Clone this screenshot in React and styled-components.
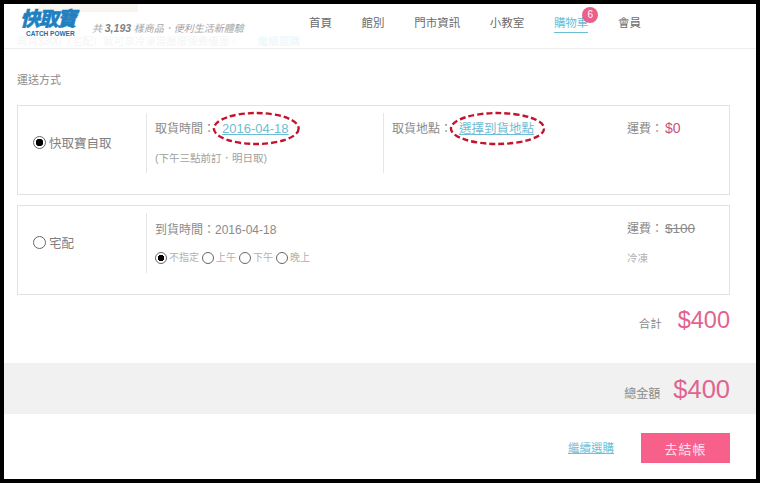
import React from 'react'
import styled, { createGlobalStyle } from 'styled-components'

const FONT = `"Liberation Sans", "Noto Sans CJK TC", sans-serif`

const GlobalStyle = createGlobalStyle`
  html, body { margin: 0; padding: 0; background: #fff; }
  body { font-family: ${FONT}; color: #777; }
  * { box-sizing: border-box; }
`

export default function App() {
  return (
    <Frame>
      <GlobalStyle />
      <Header>
        <TopStrip />
        <GhostNotice>再買$300（宅配）就可享冷凍當層限彈費優惠。<GhostLink>繼續選購</GhostLink></GhostNotice>
        <Logo>
          <LogoName>快取寶</LogoName>
          <LogoSub>CATCH POWER</LogoSub>
        </Logo>
        <Tagline>共 <b>3,193</b> 樣商品．便利生活新體驗</Tagline>
        <Nav>
          <NavItem>首頁</NavItem>
          <NavItem>館別</NavItem>
          <NavItem>門市資訊</NavItem>
          <NavItem>小教室</NavItem>
          <NavItem $active>
            購物車
            <Badge>6</Badge>
          </NavItem>
          <NavItem>會員</NavItem>
        </Nav>
      </Header>

      <Content>
        <SectionTitle>運送方式</SectionTitle>

        <OptionBox>
          <Method><Radio $checked />快取寶自取</Method>
          <Detail>
            <Line $top="8px">
              取貨時間：
              <Circled>
                <DateLink>2016-04-18</DateLink>
                <Mark />
              </Circled>
            </Line>
            <Hint>(下午三點前訂．明日取)</Hint>
          </Detail>
          <Detail>
            <Line $top="8px">
              取貨地點：
              <Circled>
                <PlaceLink>選擇到貨地點</PlaceLink>
                <Mark />
              </Circled>
            </Line>
          </Detail>
          <Fee>
            <Line>運費：<FeeValue>$0</FeeValue></Line>
          </Fee>
        </OptionBox>

        <OptionBox>
          <Method><Radio />宅配</Method>
          <Detail $wide>
            <Line $top="9px">到貨時間：2016-04-18</Line>
            <TimeRow>
              <TimeOption><SmallRadio $checked />不指定</TimeOption>
              <TimeOption><SmallRadio />上午</TimeOption>
              <TimeOption><SmallRadio />下午</TimeOption>
              <TimeOption><SmallRadio />晚上</TimeOption>
            </TimeRow>
          </Detail>
          <Fee>
            <Line $top="8px">運費：<OldFee>$100</OldFee></Line>
            <Cold>冷凍</Cold>
          </Fee>
        </OptionBox>

        <Subtotal>
          <SubLabel>合計</SubLabel>
          <SubValue>$400</SubValue>
        </Subtotal>
      </Content>

      <TotalBand>
        <TotalLabel>總金額</TotalLabel>
        <TotalValue>$400</TotalValue>
      </TotalBand>

      <Actions>
        <ContinueLink>繼續選購</ContinueLink>
        <CheckoutButton>去結帳</CheckoutButton>
      </Actions>
    </Frame>
  )
}

// hand drawn red ring from the annotated screenshot
function Mark() {
  return (
    <MarkSvg viewBox="0 0 100 32" preserveAspectRatio="none">
      <ellipse cx="50" cy="16" rx="49" ry="15" fill="none" stroke="#c3142d" strokeWidth="2.4" strokeDasharray="6 3" vectorEffect="non-scaling-stroke" />
    </MarkSvg>
  )
}

const Frame = styled.div`
  width: 760px;
  height: 483px;
  border: 4px solid #000;
  background: #fff;
  display: flex;
  flex-direction: column;
  overflow: hidden;
`

const Header = styled.header`
  position: relative;
  height: 45px;
  flex: none;
  border-bottom: 1px solid #eeeeee;
  display: flex;
  align-items: flex-start;
  padding-left: 17px;
`

const TopStrip = styled.div`
  position: absolute;
  left: 35px;
  top: 0;
  width: 99px;
  height: 8px;
  background: #f8f5f1;
`

const GhostNotice = styled.div`
  position: absolute;
  left: 13px;
  top: 30px;
  font-size: 10.5px;
  line-height: 14px;
  color: #f5f5f5;
  white-space: nowrap;
`

const GhostLink = styled.span`
  margin-left: 18px;
  color: #eaf6f9;
`

const Logo = styled.div`
  position: relative;
  width: 62px;
  margin-top: 4px;
  display: flex;
  flex-direction: column;
  align-items: flex-start;
`

const LogoName = styled.div`
  font-size: 20px;
  line-height: 22px;
  font-weight: 900;
  font-style: italic;
  color: #1f80c0;
  -webkit-text-stroke: 0.4px #1f80c0;
  letter-spacing: -1.6px;
  margin-left: -1px;
  white-space: nowrap;
`

const LogoSub = styled.div`
  font-size: 6.5px;
  line-height: 7px;
  font-weight: 700;
  color: #1a6ea6;
  margin-left: 5px;
  white-space: nowrap;
`

const Tagline = styled.div`
  position: relative;
  margin: 17px 0 0 9px;
  width: 217px;
  font-size: 10px;
  line-height: 14px;
  font-style: italic;
  color: #a5a5a5;
  white-space: nowrap;
  b { color: #808080; font-size: 10.5px; }
`

const Nav = styled.nav`
  position: relative;
  display: flex;
  gap: 29.6px;
  padding-top: 11px;
`

const NavItem = styled.div`
  position: relative;
  font-size: 11.5px;
  line-height: 16px;
  height: 18px;
  color: ${(p) => (p.$active ? '#6bbdd6' : '#6c6c6c')};
  border-bottom: ${(p) => (p.$active ? '1px solid #6bbdd6' : 'none')};
  white-space: nowrap;
`

const Badge = styled.span`
  position: absolute;
  right: -10px;
  top: -8px;
  width: 16px;
  height: 16px;
  border-radius: 50%;
  background: #ea5f8c;
  color: #fff;
  font-size: 10px;
  line-height: 16px;
  text-align: center;
`

const Content = styled.main`
  padding: 24px 26px 0 13px;
  flex: none;
`

const SectionTitle = styled.div`
  font-size: 11px;
  line-height: 14px;
  color: #8a8a8a;
  margin-bottom: 18px;
`

const OptionBox = styled.section`
  height: 90px;
  border: 1px solid #e2e2e2;
  margin-bottom: 10px;
  padding-top: 7px;
  display: grid;
  grid-template-columns: 128px 237px 235px 1fr;
`

const Method = styled.div`
  height: 58px;
  display: flex;
  align-items: center;
  padding-left: 15px;
  gap: 3px;
  font-size: 12.5px;
  color: #808080;
`

const Radio = styled.span`
  width: 13px;
  height: 13px;
  flex: none;
  border-radius: 50%;
  border: 1px solid #666;
  background: ${(p) => (p.$checked ? 'radial-gradient(circle, #000 0 3.5px, #fff 4px)' : '#fff')};
`

const SmallRadio = styled(Radio)`
  width: 12px;
  height: 12px;
  background: ${(p) => (p.$checked ? 'radial-gradient(circle, #000 0 3px, #fff 3.5px)' : '#fff')};
`

const Detail = styled.div`
  height: 60px;
  border-left: 1px solid #e6e6e6;
  padding-left: 8px;
  ${(p) => p.$wide && 'grid-column: span 2;'}
`

const Fee = styled.div`
  grid-column: 4;
  padding-left: 9px;
`

const Line = styled.div`
  font-size: 12px;
  line-height: 16px;
  color: #8a8a8a;
  margin-top: ${(p) => p.$top || '7px'};
  white-space: nowrap;
`

const Hint = styled.div`
  font-size: 10.5px;
  line-height: 14px;
  color: #a0a0a0;
  margin-top: 14px;
`

const Circled = styled.span`
  position: relative;
  display: inline-block;
  margin-left: 7px;
`

const DateLink = styled.span`
  font-size: 13px;
  color: #6fbdd4;
  text-decoration: underline;
`

const PlaceLink = styled.span`
  font-size: 12.5px;
  color: #6fbdd4;
  text-decoration: underline;
`

const MarkSvg = styled.svg`
  position: absolute;
  left: -9px;
  top: -9px;
  width: calc(100% + 20px);
  height: 33px;
  overflow: visible;
`

const FeeValue = styled.span`
  font-size: 14px;
  color: #c2557c;
  margin-left: 2px;
`

const OldFee = styled.span`
  font-size: 13.5px;
  color: #8a8a8a;
  text-decoration: line-through;
  margin-left: 2px;
`

const Cold = styled.div`
  font-size: 10.5px;
  line-height: 14px;
  color: #b0b0b0;
  margin-top: 14px;
`

const TimeRow = styled.div`
  display: flex;
  gap: 3px;
  margin-top: 13px;
`

const TimeOption = styled.div`
  display: flex;
  align-items: center;
  gap: 2px;
  font-size: 10px;
  line-height: 14px;
  color: #b0b0b0;
`

const Subtotal = styled.div`
  display: flex;
  justify-content: flex-end;
  align-items: flex-end;
  gap: 16px;
  height: 32px;
  margin-top: -3px;
`

const SubLabel = styled.span`
  font-size: 11.5px;
  line-height: 16px;
  color: #8a8a8a;
  padding-bottom: 2px;
`

const SubValue = styled.span`
  font-size: 23.5px;
  line-height: 28px;
  color: #e2638f;
`

const TotalBand = styled.div`
  height: 51px;
  margin-top: 29px;
  flex: none;
  background: #f1f1f1;
  display: flex;
  justify-content: flex-end;
  align-items: center;
  gap: 13px;
  padding-right: 26px;
`

const TotalLabel = styled.span`
  font-size: 12px;
  color: #8a8a8a;
  margin-top: 7px;
`

const TotalValue = styled.span`
  font-size: 25.5px;
  line-height: 30px;
  color: #e2638f;
`

const Actions = styled.div`
  display: flex;
  justify-content: flex-end;
  align-items: center;
  gap: 27px;
  padding: 19px 26px 0 0;
`

const ContinueLink = styled.a`
  font-size: 11.5px;
  color: #6fc1d8;
  text-decoration: underline;
  margin-top: -2px;
`

const CheckoutButton = styled.button`
  width: 89px;
  height: 30px;
  border: none;
  background: #f6608b;
  color: #fbe3ea;
  font-family: ${FONT};
  font-size: 13px;
  letter-spacing: 1px;
`
